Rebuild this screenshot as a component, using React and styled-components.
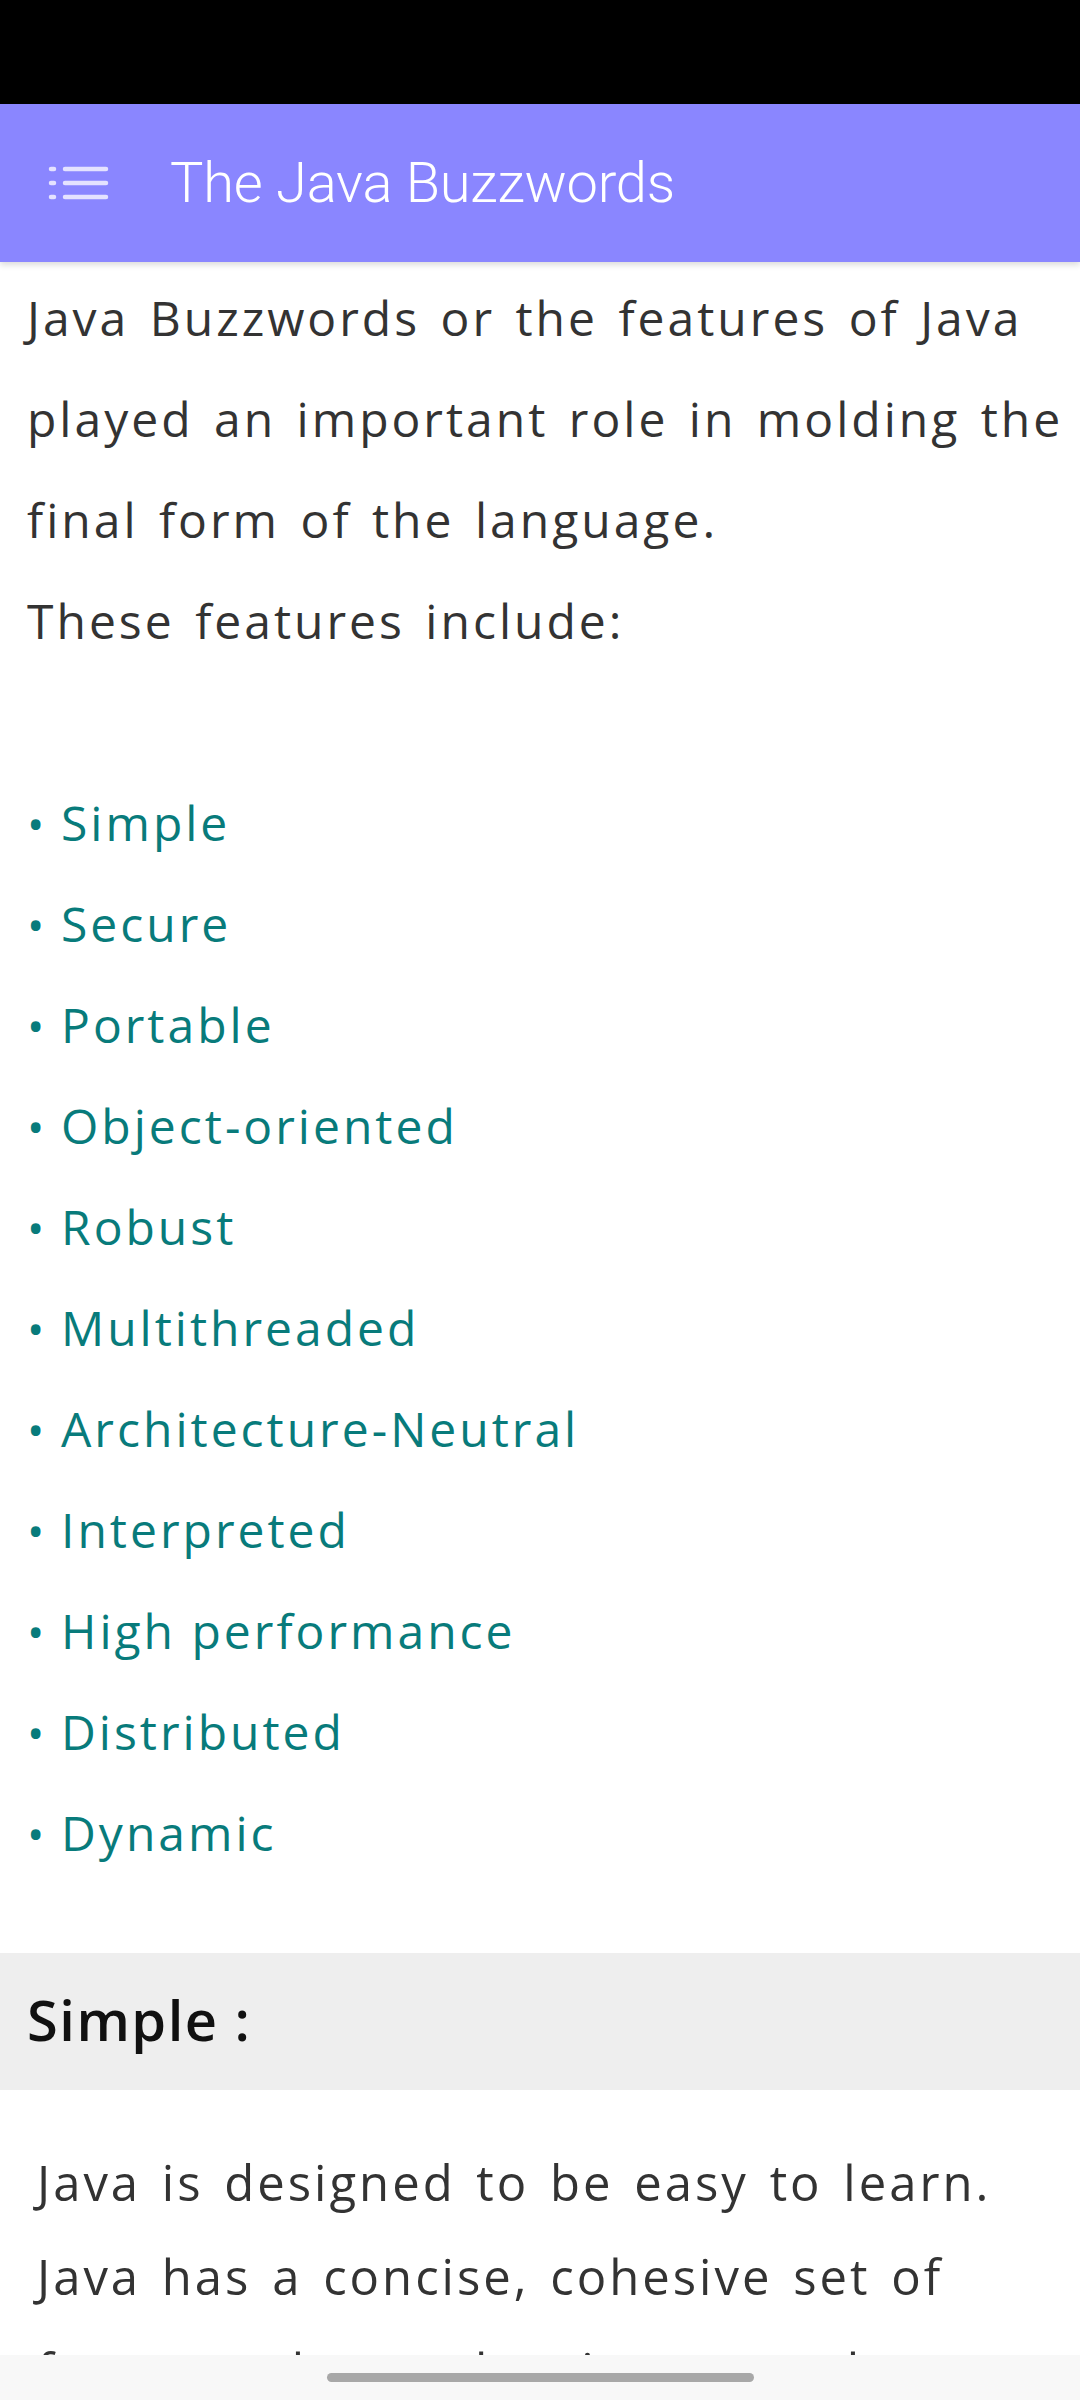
import React from "react";
import styled, { createGlobalStyle } from "styled-components";

const GlobalStyle = createGlobalStyle`
  html, body { margin: 0; padding: 0; background: #ffffff; }
  * { box-sizing: border-box; }
`;

const Screen = styled.div`
  position: relative;
  width: 1080px;
  height: 2400px;
  overflow: hidden;
  display: flex;
  flex-direction: column;
  background: #ffffff;
`;

const StatusBar = styled.div`
  height: 104px;
  flex: none;
  background: #000000;
`;

const AppBar = styled.header`
  position: relative;
  z-index: 2;
  flex: none;
  height: 158px;
  display: flex;
  align-items: center;
  padding-left: 48px;
  background: #8a86ff;
  box-shadow: 0 3px 6px rgba(0, 0, 0, 0.14);
`;

const MenuButton = styled.button`
  border: 0;
  padding: 0;
  background: transparent;
  width: 62px;
  height: 40px;
  display: flex;
  align-items: center;
  justify-content: flex-start;
`;

const Title = styled.h1`
  margin: 0 0 0 60px;
  font-family: Roboto, "Liberation Sans", sans-serif;
  font-weight: 300;
  font-size: 56px;
  letter-spacing: -0.2px;
  color: #ffffff;
`;

const Content = styled.main`
  flex: 1;
  overflow: hidden;
  font-family: "Open Sans", "Noto Sans", sans-serif;
`;

const Intro = styled.p`
  margin: 5px 0 0;
  padding: 0 12px 0 27px;
  font-size: 48px;
  line-height: 101px;
  letter-spacing: 3px;
  word-spacing: 5px;
  color: #333333;
`;

const FeatureList = styled.ul`
  list-style: none;
  margin: 101px 0 0;
  padding: 0 0 0 27px;
  font-size: 48px;
  line-height: 101px;
  letter-spacing: 3px;
  color: #087b7b;
`;

const Feature = styled.li`
  display: block;
  white-space: nowrap;
`;

const Bullet = styled.span`
  display: inline-block;
  width: 34px;
  font-size: 46px;
  line-height: 1;
  letter-spacing: 0;
`;

const SectionHeader = styled.h2`
  margin: 70px 0 0;
  height: 137px;
  display: flex;
  align-items: center;
  padding: 0 0 6px 27px;
  background: #eeeeee;
  font-size: 56px;
  font-weight: 600;
  letter-spacing: 1.5px;
  color: #111111;
`;

const Body = styled.p`
  margin: 45px 0 0;
  padding: 0 12px 0 37px;
  font-size: 49px;
  line-height: 94px;
  letter-spacing: 3px;
  word-spacing: 5px;
  color: #333333;
`;

const NavBar = styled.div`
  position: absolute;
  left: 0;
  right: 0;
  bottom: 0;
  height: 45px;
  background: #f8f8f8;
  display: flex;
  justify-content: center;
  padding-top: 18px;
  z-index: 3;
`;

const Handle = styled.div`
  width: 427px;
  height: 9px;
  border-radius: 5px;
  background: #a8a8a8;
`;

const MenuIcon = () => (
  <svg width="62" height="36" viewBox="0 0 62 36" fill="none">
    <g stroke="#e4e2ff" strokeWidth="4.5" strokeLinecap="round">
      <line x1="3" y1="4" x2="6" y2="4" />
      <line x1="3" y1="18" x2="6" y2="18" />
      <line x1="3" y1="32" x2="6" y2="32" />
      <line x1="17" y1="4" x2="58" y2="4" />
      <line x1="17" y1="18" x2="58" y2="18" />
      <line x1="17" y1="32" x2="58" y2="32" />
    </g>
  </svg>
);

const features = [
  "Simple",
  "Secure",
  "Portable",
  "Object-oriented",
  "Robust",
  "Multithreaded",
  "Architecture-Neutral",
  "Interpreted",
  "High performance",
  "Distributed",
  "Dynamic",
];

export default function App() {
  return (
    <>
      <GlobalStyle />
      <Screen>
        <StatusBar />
        <AppBar>
          <MenuButton aria-label="menu">
            <MenuIcon />
          </MenuButton>
          <Title>The Java Buzzwords</Title>
        </AppBar>
        <Content>
          <Intro>
            Java Buzzwords or the features of Java
            <br />
            played an important role in molding the
            <br />
            final form of the language.
            <br />
            These features include:
          </Intro>
          <FeatureList>
            {features.map((f) => (
              <Feature key={f}>
                <Bullet>•</Bullet>
                {f}
              </Feature>
            ))}
          </FeatureList>
          <SectionHeader>Simple :</SectionHeader>
          <Body>
            Java is designed to be easy to learn.
            <br />
            Java has a concise, cohesive set of
            <br />
            features that makes it easy to learn and
          </Body>
        </Content>
        <NavBar>
          <Handle />
        </NavBar>
      </Screen>
    </>
  );
}
